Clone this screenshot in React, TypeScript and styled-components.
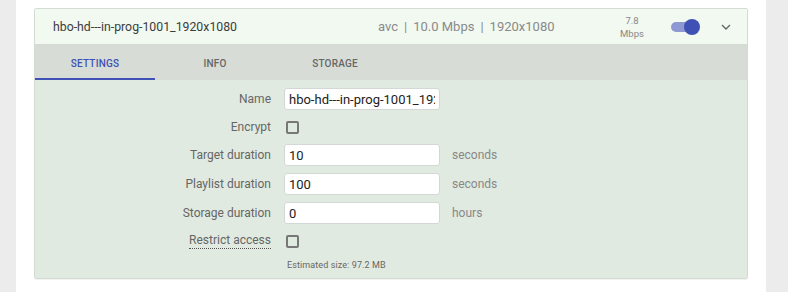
import React from "react";
import styled, { createGlobalStyle } from "styled-components";

const Global = createGlobalStyle`
  html, body { margin: 0; padding: 0; background: #ececec; }
  body { font-family: Roboto, "Liberation Sans", Arial, sans-serif; }
  * { box-sizing: border-box; }
`;

const Page = styled.div`
  display: flex;
  width: 788px;
  height: 292px;
  overflow: hidden;
`;

const Side = styled.div<{ $w: number }>`
  width: ${(p) => p.$w}px;
  flex: none;
  background: #ececec;
`;

const Main = styled.div`
  width: 750px;
  flex: none;
  background: #ffffff;
  padding: 8px 0 0 18px;
`;

const Card = styled.div`
  width: 714px;
  border: 1px solid #d3dcd3;
  border-radius: 2px;
  box-shadow: 0 1px 1px rgba(0, 0, 0, 0.06);
  overflow: hidden;
`;

const Header = styled.div`
  height: 36px;
  display: flex;
  align-items: center;
  background: #f1f9f1;
  padding: 0 15px 0 18px;
  border-bottom: 1px solid #d3dcd3;
`;

const Title = styled.div`
  flex: 1;
  font-size: 12.3px;
  color: #3c3c3c;
`;

const Stats = styled.div`
  font-size: 13px;
  color: #8a8a8a;
  width: 168px;
  white-space: nowrap;
  margin-right: 71px;
`;

const Sep = styled.span`
  margin: 0 6px;
`;

const Rate = styled.div`
  width: 30px;
  text-align: center;
  font-size: 9.5px;
  line-height: 13px;
  color: #888;
  margin-right: 24px;
`;

const Toggle = styled.div`
  position: relative;
  width: 28px;
  height: 10px;
  border-radius: 5px;
  background: #8e98d2;
  margin-right: 21px;
`;

const Knob = styled.div`
  position: absolute;
  right: -1px;
  top: -3px;
  width: 16px;
  height: 16px;
  border-radius: 50%;
  background: #3f51b5;
`;

const Chevron = styled.div`
  width: 12px;
  height: 12px;
  display: flex;
  align-items: center;
  justify-content: center;
`;

const Tabs = styled.div`
  display: flex;
  height: 35px;
  background: #d7ddd6;
`;

const Tab = styled.div<{ $active?: boolean }>`
  width: 120px;
  display: flex;
  align-items: center;
  justify-content: center;
  font-size: 10px;
  font-weight: 500;
  letter-spacing: 0.2px;
  color: ${(p) => (p.$active ? "#3f51b5" : "#666")};
  border-bottom: 2px solid ${(p) => (p.$active ? "#3f51b5" : "transparent")};
  padding-top: 4px;
`;

const Body = styled.div`
  background: #e1eae1;
  padding: 8px 0 8px;
  display: grid;
  grid-template-columns: 236px 156px auto;
  column-gap: 13px;
  row-gap: 7px;
  align-items: center;
`;

const Label = styled.div<{ $dotted?: boolean }>`
  text-align: right;
  font-size: 12px;
  color: #666;
  justify-self: end;
  ${(p) =>
    p.$dotted
      ? "border-bottom: 1px dotted #555; line-height: 15px;"
      : ""}
`;

const Input = styled.input`
  width: 156px;
  height: 22px;
  border: 1px solid #d4d8d4;
  border-radius: 3px;
  background: #fff;
  font-family: Roboto, "Liberation Sans", Arial, sans-serif;
  font-size: 13px;
  color: #222;
  padding: 0 4px;
  outline: none;
`;

const CheckCell = styled.div`
  height: 20px;
  display: flex;
  align-items: center;
  padding-left: 2px;
`;

const Check = styled.div`
  width: 13px;
  height: 13px;
  border: 2px solid #777;
  border-radius: 2px;
`;

const Unit = styled.div`
  font-size: 12px;
  color: #888;
  margin-left: -1px;
`;

const Note = styled.div`
  grid-column: 2 / 4;
  font-size: 9px;
  color: #666;
  padding-left: 3px;
  margin-top: 2px;
  letter-spacing: 0.1px;
`;

const Empty = styled.div``;

export default function App() {
  return (
    <>
      <Global />
      <Page>
        <Side $w={16} />
        <Main>
          <Card>
            <Header>
              <Title>hbo-hd---in-prog-1001_1920x1080</Title>
              <Stats>
                avc<Sep>|</Sep>10.0 Mbps<Sep>|</Sep>1920x1080
              </Stats>
              <Rate>
                7.8
                <br />
                Mbps
              </Rate>
              <Toggle>
                <Knob />
              </Toggle>
              <Chevron>
                <svg width="10" height="6" viewBox="0 0 10 6">
                  <path d="M1 1 L5 5 L9 1" fill="none" stroke="#666" strokeWidth="1.4" />
                </svg>
              </Chevron>
            </Header>
            <Tabs>
              <Tab $active>SETTINGS</Tab>
              <Tab>INFO</Tab>
              <Tab>STORAGE</Tab>
            </Tabs>
            <Body>
              <Label>Name</Label>
              <Input defaultValue="hbo-hd---in-prog-1001_1920x1080" />
              <Empty />

              <Label>Encrypt</Label>
              <CheckCell>
                <Check />
              </CheckCell>
              <Empty />

              <Label>Target duration</Label>
              <Input defaultValue="10" />
              <Unit>seconds</Unit>

              <Label>Playlist duration</Label>
              <Input defaultValue="100" />
              <Unit>seconds</Unit>

              <Label>Storage duration</Label>
              <Input defaultValue="0" />
              <Unit>hours</Unit>

              <Label $dotted>Restrict access</Label>
              <CheckCell>
                <Check />
              </CheckCell>
              <Empty />

              <Empty />
              <Note>Estimated size: 97.2 MB</Note>
            </Body>
          </Card>
        </Main>
        <Side $w={22} />
      </Page>
    </>
  );
}
